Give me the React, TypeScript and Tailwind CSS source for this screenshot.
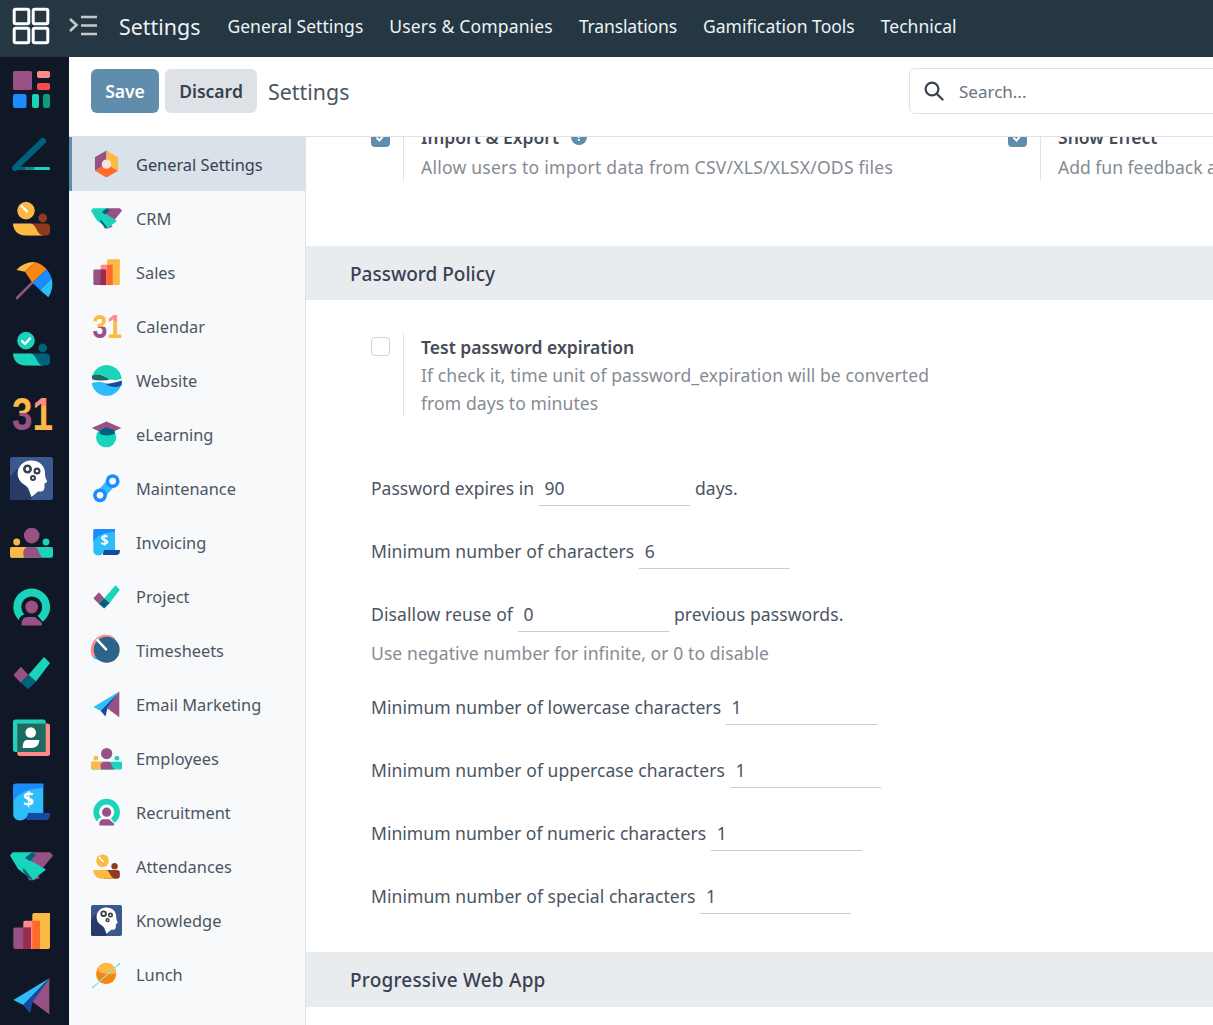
import type { ReactNode } from 'react';

const Box = ({ size, children }: { size: number; children: ReactNode }) => (
  <svg width={size} height={size} viewBox="0 0 43 43" className="shrink-0 block overflow-visible">
    {children}
  </svg>
);

const Dashboards = () => (
  <>
    <rect x="3" y="3" width="19" height="19" rx="1.5" fill="#985184" />
    <rect x="27" y="3" width="13" height="7" rx="2" fill="#ff8a8a" />
    <rect x="27" y="15" width="13" height="7" rx="2" fill="#fc4a4f" />
    <rect x="3" y="26" width="13.5" height="14" rx="2" fill="#1a8cff" />
    <rect x="22" y="26" width="7" height="14" rx="2" fill="#1ad3bb" />
    <rect x="33" y="26" width="7" height="14" rx="2" fill="#0a9d7e" />
  </>
);

const Pen = () => (
  <>
    <path d="M33 8 L5 35" stroke="#00627a" strokeWidth="6" strokeLinecap="round" fill="none" />
    <rect x="3" y="34" width="12" height="3" fill="#00627a" />
    <rect x="15" y="34" width="9" height="3" fill="#0f8a7e" />
    <rect x="24" y="34" width="16" height="3" rx="1" fill="#1ad3bb" />
  </>
);

const PersonBar = ({ a, b, hand }: { a: string; b: string; hand: ReactNode }) => (
  <>
    <circle cx="16" cy="13.6" r="8.8" fill={a} />
    <circle cx="32.7" cy="21" r="4.4" fill={b} />
    <path d="M18 26.5 H36 a4 4 0 0 1 4 4 v4 a4 4 0 0 1 -4 4 H18 Z" fill={b} />
    <path d="M3 26.5 H20 C27 26.5 26 38.5 34 38.5 H15 C8 38.5 3 33 3 26.5 Z" fill={a} />
    {hand}
  </>
);

const Attendance = () => (
  <PersonBar
    a="#fcb944"
    b="#8f3a1e"
    hand={<path d="M11.5 9 L17 14.5" stroke="#fff" strokeWidth="2.2" strokeLinecap="round" />}
  />
);

const CheckPerson = () => (
  <PersonBar
    a="#1ad3bb"
    b="#00627a"
    hand={<path d="M12 14 L15 17 L20 11.5" stroke="#fff" strokeWidth="2.4" fill="none" strokeLinecap="round" strokeLinejoin="round" />}
  />
);

const Umbrella = () => (
  <>
    <path d="M7 36 L22.3 20.7" stroke="#985184" strokeWidth="2.6" strokeLinecap="round" />
    <path d="M6.5 8 A24 24 0 0 1 25 0 L15 9.7 Z" fill="#fcb944" />
    <path d="M15 9.7 L25 0 A24 24 0 0 1 36.7 7.3 L22.3 20.7 Z" fill="#f78613" />
    <path d="M22.3 20.7 L36.7 7.3 A24 24 0 0 1 41.7 16.3 L30 28 Z" fill="#1a8cff" />
    <path d="M30 28 L41.7 16.3 A24 24 0 0 1 38.3 35.3 Z" fill="#2ebcfa" />
  </>
);

const Calendar = () => (
  <>
    <defs>
      <linearGradient id="cal3" gradientUnits="userSpaceOnUse" x1="0" y1="5" x2="0" y2="38">
        <stop offset="0.5" stopColor="#fcb944" />
        <stop offset="0.5" stopColor="#985184" />
      </linearGradient>
      <linearGradient id="cal1" gradientUnits="userSpaceOnUse" x1="0" y1="5" x2="0" y2="38">
        <stop offset="0.28" stopColor="#ff8a8a" />
        <stop offset="0.28" stopColor="#fcb944" />
      </linearGradient>
    </defs>
    <g transform="translate(2 0) scale(0.8 1)">
      <text y="38" fontSize="46" fontWeight="700" fontFamily="'Liberation Sans', sans-serif">
        <tspan fill="url(#cal3)">3</tspan>
        <tspan fill="url(#cal1)">1</tspan>
      </text>
    </g>
  </>
);

const Knowledge = () => (
  <>
    <rect width="43" height="43" rx="2.5" fill="#3a5a8f" />
    <path d="M0 20 L7 12 L22 41 L20 43 H2.5 A2.5 2.5 0 0 1 0 40.5 Z" fill="#283a66" />
    <path
      d="M21 3.5 C30 3.5 35.5 9.5 35 17 C34.8 20 36.5 23 37 24 C37.5 25.5 35 26 34.5 26.5 C34.5 30 35 34 31 34.5 L28 34.5 L21.5 40 L19 33 C18 28 11 28 8.5 21 C5.5 12 12 3.5 21 3.5 Z"
      fill="#fff"
    />
    <circle cx="17.5" cy="12" r="3.2" fill="none" stroke="#3b3f4a" strokeWidth="2.6" />
    <circle cx="27" cy="14" r="2.4" fill="none" stroke="#3b3f4a" strokeWidth="2.2" />
    <circle cx="23" cy="21" r="2" fill="none" stroke="#3b3f4a" strokeWidth="2" />
  </>
);

const Employees = () => (
  <>
    <circle cx="21.7" cy="14.6" r="7.8" fill="#985184" />
    <circle cx="6.7" cy="21" r="3.4" fill="#fcb944" />
    <circle cx="36" cy="21" r="3.4" fill="#1ad3bb" />
    <path d="M2 26 H41 A2 2 0 0 1 43 28 V34.7 A2 2 0 0 1 41 36.7 H2 A2 2 0 0 1 0 34.7 V28 A2 2 0 0 1 2 26 Z" fill="#1ad3bb" />
    <path d="M2 26 H16 V36.7 H2 A2 2 0 0 1 0 34.7 V28 A2 2 0 0 1 2 26 Z" fill="#fcb944" />
    <path d="M14 36.7 C13 33 12 26 19 26 H24 C30 26 27 33 33 36.7 Z" fill="#985184" />
  </>
);

const Recruitment = ({ hole = '#101828' }: { hole?: string }) => (
  <>
    <circle cx="21.7" cy="21" r="18.4" fill="#1ad3bb" />
    <circle cx="21.7" cy="21" r="10.5" fill={hole} />
    <path d="M26 28 L36 39.4 H9 V34 C9 30 14 28 18 28 Z" fill={hole} />
    <circle cx="21.7" cy="21" r="6.4" fill="#985184" />
    <path d="M11.7 39.4 C11 33.5 14 31 18 31 H25 L32 37 V39.4 Z" fill="#985184" />
  </>
);

const Project = () => (
  <>
    <path d="M3.3 24 L11 15.7 L18.3 24 L10.7 31.7 Z" fill="#985184" />
    <path d="M18.3 24 L34 6 L40 12 L26 30.5 Z" fill="#1ad3bb" />
    <path d="M10.7 31.7 L18.3 24 L26 30.5 L18.3 38.3 Z" fill="#00627a" />
  </>
);

const EmployeeCard = () => (
  <>
    <rect x="3" y="3.5" width="32.7" height="32.5" rx="2.5" fill="#1ad3bb" />
    <rect x="7.3" y="7.5" width="32.7" height="32.5" rx="2.5" fill="#ff8a8a" />
    <rect x="7.3" y="7.5" width="28.4" height="28.5" fill="#1c6b61" />
    <circle cx="20.7" cy="16.5" r="5.3" fill="#fff" />
    <path d="M17 24 H29.3 C29.3 29 26 32 21 32 H12.7 C12.7 27 14 24 17 24 Z" fill="#fff" />
  </>
);

const Invoicing = () => (
  <>
    <path d="M16.7 32 H40 V34 C40 37 38 39 35 39 H16.7 Z" fill="#164a9e" />
    <path d="M5.5 2.7 H33.3 V32 H18 C18 36 15 39.4 10 39.4 C6 39.4 3.3 37 3.3 33 V5 A2.2 2.2 0 0 1 5.5 2.7 Z" fill="#2ebcfa" />
    <path d="M5.5 2.7 H33.3 V7 C22 7 10 10 3.3 20 V5 A2.2 2.2 0 0 1 5.5 2.7 Z" fill="#1a8cff" />
    <text x="18.5" y="25" fontSize="19" fontWeight="700" textAnchor="middle" fill="#fff" fontFamily="'Noto Sans', sans-serif">
      $
    </text>
  </>
);

const Crm = () => (
  <>
    <path d="M14 24 L19 20 L30 33 L23 35.3 H19 Z" fill="#985184" />
    <path d="M20 7.3 H40 L43 10.6 L31.7 24.6 L18 13 Z" fill="#985184" />
    <path d="M2.7 7.3 H23 L18 14 L36 24.6 L23 35.3 L8 24 L0 10.6 Z" fill="#1ad3bb" />
    <path d="M15 13 L22 7.3 L26 10 L20 16 Z" fill="#00627a" />
    <path d="M13.5 23 L20 31 L23 35.3 L18.5 33 L13 26 Z" fill="#00627a" />
  </>
);

const Sales = () => (
  <>
    <path d="M24 3.1 H40 V37 A2 2 0 0 1 38 39 H22.3 V5 A2 2 0 0 1 24 3.1 Z" fill="#fcb944" />
    <path d="M15.5 10.8 H30 V39 H13.3 V13 A2 2 0 0 1 15.5 10.8 Z" fill="#ff8a8a" />
    <rect x="22.3" y="10.8" width="7.7" height="28.2" fill="#ff6a2b" />
    <path d="M5.5 17.5 H21 V39 H5 A2 2 0 0 1 3.3 37 V19.5 A2 2 0 0 1 5.5 17.5 Z" fill="#985184" />
    <rect x="13.3" y="17.5" width="7.7" height="21.5" fill="#9a2b4b" />
  </>
);

const Email = () => (
  <>
    <path d="M22.3 26.7 L39.3 3.3 V39.3 Z" fill="#985184" />
    <path d="M3.3 25 L39.3 3.3 L13.3 30 Z" fill="#2ebcfa" />
    <path d="M13.3 30 L20 38.3 L22.8 26.5 L39.3 3.3 Z" fill="#164a9e" />
  </>
);

const GeneralSettings = () => (
  <>
    <path d="M21.5 21 L5.5 30 V11.5 L21.5 2 Z" fill="#985184" />
    <path d="M21.5 2 L37.5 11.5 V30 L21.5 21 Z" fill="#fcb944" />
    <path d="M5.5 30 L21.5 21 L37.5 30 L21.5 39.5 Z" fill="#ff6a2b" />
    <circle cx="21.5" cy="21" r="6.5" fill="#f3e4dc" />
  </>
);

const Website = () => (
  <>
    <path d="M1.5 15 A21 21 0 0 1 42 16 L42.5 19 C35 21 31 21 26 20 C18 14 8 11 1.5 15 Z" fill="#1ad3bb" />
    <path d="M1.5 15 C8 11 18 14 26 20.5 C18 22 8 22 2 20 C1 18 1 16.5 1.5 15 Z" fill="#1c6b61" />
    <path d="M1 25 C9 23 15 23 22 26 C30 30 36 28 42.5 25 A21 21 0 0 1 1 25 Z" fill="#2ebcfa" />
    <path d="M20 26 C28 26 35 24 42.5 21.5 C43 24 43 26 42 28.5 C35 32 27 31 20 26 Z" fill="#164a9e" />
  </>
);

const ELearning = () => (
  <>
    <circle cx="21" cy="25.3" r="14" fill="#1ad3bb" />
    <path d="M21.5 3.5 L42 12.4 L33 16.5 H10 L1 12.4 Z" fill="#985184" />
    <path d="M12 16 L21.5 11.3 L33 16 V20 C27 23.8 17 23.8 12 20 Z" fill="#00627a" />
  </>
);

const Maintenance = () => (
  <>
    <path d="M12.5 31 L30 11.3" stroke="#2ebcfa" strokeWidth="13" />
    <circle cx="12.5" cy="31" r="9.6" fill="#1a8cff" />
    <circle cx="30" cy="11.3" r="9.6" fill="#1a8cff" />
    <circle cx="12.5" cy="31" r="4.6" fill="#f8f9fa" />
    <circle cx="30" cy="11.3" r="4.6" fill="#f8f9fa" />
  </>
);

const Timesheets = () => (
  <>
    <path d="M3 32 A21 21 0 0 1 32 3 Z" fill="#ff8a8a" />
    <path d="M32 3 A21 21 0 0 1 3 32 Z" fill="#2ebcfa" />
    <circle cx="21.8" cy="20.5" r="18" fill="#2b6488" />
    <path d="M9 7 L21 20" stroke="#fff" strokeWidth="3.4" strokeLinecap="round" />
  </>
);

const Lunch = () => (
  <>
    <circle cx="21" cy="21" r="14" fill="#f78613" />
    <path d="M8 14 A14 14 0 0 1 35 20 C25 21 13 22 8 14 Z" fill="#fcb944" />
    <path d="M2 40 L40 6" stroke="#1ad3bb" strokeWidth="1.4" />
    <path d="M4 38 L37 9" stroke="#fff" strokeWidth="0.9" />
  </>
);

const railIcons = [
  Dashboards,
  Pen,
  Attendance,
  Umbrella,
  CheckPerson,
  Calendar,
  Knowledge,
  Employees,
  Recruitment,
  Project,
  EmployeeCard,
  Invoicing,
  Crm,
  Sales,
  Email,
];

const menuItems = [
  { label: 'General Settings', Icon: GeneralSettings },
  { label: 'CRM', Icon: Crm },
  { label: 'Sales', Icon: Sales },
  { label: 'Calendar', Icon: Calendar },
  { label: 'Website', Icon: Website },
  { label: 'eLearning', Icon: ELearning },
  { label: 'Maintenance', Icon: Maintenance },
  { label: 'Invoicing', Icon: Invoicing },
  { label: 'Project', Icon: Project },
  { label: 'Timesheets', Icon: Timesheets },
  { label: 'Email Marketing', Icon: Email },
  { label: 'Employees', Icon: Employees },
  { label: 'Recruitment', Icon: () => <Recruitment hole="#f8f9fa" /> },
  { label: 'Attendances', Icon: Attendance },
  { label: 'Knowledge', Icon: Knowledge },
  { label: 'Lunch', Icon: Lunch },
];

const TopBar = () => (
  <header className="flex items-center h-[57px] shrink-0 bg-[#243742] text-[#eef2f5]">
    <svg width="69" height="57" viewBox="0 0 69 57" className="shrink-0" fill="none" stroke="#fff" strokeWidth="3">
      <rect x="14.2" y="9.2" width="14.6" height="14.6" rx="1.5" />
      <rect x="33.2" y="9.2" width="14.6" height="14.6" rx="1.5" />
      <rect x="14.2" y="28.2" width="14.6" height="14.6" rx="1.5" />
      <rect x="33.2" y="28.2" width="14.6" height="14.6" rx="1.5" />
    </svg>
    <svg width="29" height="21" viewBox="0 0 29 21" className="shrink-0 -mt-[6px]" fill="none" stroke="#c4c8cb" strokeWidth="2.6">
      <path d="M1 4 L7.5 10 L1 16" />
      <path d="M12 2 H28 M12 10.5 H28 M12 19 H28" />
    </svg>
    <span className="ml-[21px] mr-[27px] pb-[3px] text-[21.4px]">Settings</span>
    <nav className="flex gap-[26px] pb-[4px] text-[17.55px]">
      <span>General Settings</span>
      <span className="tracking-[0.15px]">Users &amp; Companies</span>
      <span className="-tracking-[0.15px]">Translations</span>
      <span>Gamification Tools</span>
      <span>Technical</span>
    </nav>
  </header>
);

const ControlPanel = () => (
  <div className="flex items-start h-[80px] shrink-0 pl-[22px] pt-[11px] bg-white border-b border-[#dee2e6]">
    <div className="flex items-center h-[46px]">
      <button className="w-[68px] h-[44px] shrink-0 rounded-[6px] bg-[#5f8dab] text-white text-[17.55px] font-semibold">Save</button>
      <button className="w-[92px] h-[44px] shrink-0 ml-[6px] rounded-[6px] bg-[#dee2e6] text-[#374151] text-[17.55px] font-semibold">
        Discard
      </button>
      <span className="w-[81px] shrink-0 ml-[11px] pt-[2px] text-[21.4px] text-[#4b5563]">Settings</span>
      <div className="flex items-center ml-[560px] w-[500px] h-[46px] shrink-0 pl-[14px] border border-[#dee2e6] rounded-[6px]">
        <svg width="20" height="20" viewBox="0 0 20 20" fill="none" stroke="#374151" strokeWidth="2.2">
          <circle cx="8" cy="8" r="6.4" />
          <path d="M12.6 12.6 L18.5 18.5" strokeLinecap="round" />
        </svg>
        <span className="ml-[15px] pt-[1px] text-[17px] text-[#6b7280]">Search...</span>
      </div>
    </div>
  </div>
);

const Checkbox = ({ checked }: { checked?: boolean }) =>
  checked ? (
    <div className="flex items-center justify-center w-[19px] h-[19px] -mt-[1px] rounded-[4px] bg-[#5f8dab]">
      <svg width="13" height="13" viewBox="0 0 13 13" fill="none" stroke="#fff" strokeWidth="2">
        <path d="M2.5 6.5 L5.5 9.5 L10.5 3.5" />
      </svg>
    </div>
  ) : (
    <div className="w-[19px] h-[19px] rounded-[4px] border border-[#ced4da] bg-white" />
  );

const Setting = ({
  title,
  help,
  checked,
  width,
  children,
}: {
  title: string;
  help?: boolean;
  checked?: boolean;
  width: string;
  children: ReactNode;
}) => (
  <div className={`flex shrink-0 ${width}`}>
    <div className="w-[32px] pt-[4px] shrink-0">
      <Checkbox checked={checked} />
    </div>
    <div className="pl-[17px] border-l border-[#dee2e6] leading-[28px]">
      <div className={`flex items-center gap-[12px] font-semibold text-[#454b55] ${checked ? '-mt-[2px] mb-[2px]' : ''}`}>
        {title}
        {help && (
          <span className="flex items-center justify-center w-[16px] h-[16px] rounded-full bg-[#5f8dab] text-white text-[12px] font-bold">
            ?
          </span>
        )}
      </div>
      <div className="text-[#858b93]">{children}</div>
    </div>
  </div>
);

const SectionBar = ({ title, className }: { title: string; className: string }) => (
  <div className={`flex items-center pl-[44px] pt-[2px] bg-[#e9ecef] text-[19px] font-medium text-[#374151] ${className}`}>{title}</div>
);

const NumberRow = ({
  label,
  value,
  suffix,
  tracking = 'tracking-[0.05px]',
}: {
  label: string;
  value: string;
  suffix?: string;
  tracking?: string;
}) => (
  <div className={`flex items-center h-[37px] pt-[1px] text-[#4b5563] ${tracking}`}>
    <span>{label}</span>
    <div className="flex items-center w-[151px] h-[36px] ml-[5px] pl-[5.5px] pt-[1px] border-b border-[#ccc]">{value}</div>
    {suffix && <span className="ml-[5px]">{suffix}</span>}
  </div>
);

const Sidebar = () => (
  <aside className="flex flex-col w-[237px] shrink-0 bg-[#f8f9fa] border-r border-[#dee2e6]">
    {menuItems.map(({ label, Icon }, i) => (
      <div
        key={label}
        className={`flex items-center h-[54px] shrink-0 gap-[14px] text-[16.35px] text-[#4b5563] border-l-[3px] pl-[19px] ${
          i === 0 ? 'bg-[#d8e2e8] border-[#5f8dab] text-[#374151]' : 'border-transparent'
        }`}
      >
        <Box size={31}>
          <Icon />
        </Box>
        <span className="pt-[2px]">{label}</span>
      </div>
    ))}
  </aside>
);

const Content = () => (
  <main className="flex-1 min-w-0 overflow-hidden bg-white">
    <div className="-mt-[12px] w-[1100px]">
      <div className="flex pl-[65px] pb-[65px]">
        <Setting title="Import & Export" help checked width="w-[637px]">
          <span className="tracking-[0.24px]">Allow users to import data from CSV/XLS/XLSX/ODS files</span>
        </Setting>
        <Setting title="Show Effect" checked width="w-[400px]">
          <span className="whitespace-nowrap">Add fun feedback and motivate your employees</span>
        </Setting>
      </div>
      <SectionBar title="Password Policy" className="h-[54px]" />
      <div className="pt-[33px] pb-[38px] pl-[65px]">
        <Setting title="Test password expiration" width="w-[575px]">
          <span className="tracking-[0.08px]">If check it, time unit of password_expiration will be converted from days to minutes</span>
        </Setting>
        <div className="mt-[52px] flex flex-col gap-[26px]">
          <NumberRow label="Password expires in" value="90" suffix="days." tracking="tracking-normal" />
          <NumberRow label="Minimum number of characters" value="6" />
          <div>
            <NumberRow label="Disallow reuse of" value="0" suffix="previous passwords." tracking="tracking-[0.1px]" />
            <div className="mt-[7px] -mb-[5px] leading-[28px] text-[#858b93] tracking-[0.08px]">
              Use negative number for infinite, or 0 to disable
            </div>
          </div>
          <NumberRow label="Minimum number of lowercase characters" value="1" />
          <NumberRow label="Minimum number of uppercase characters" value="1" />
          <NumberRow label="Minimum number of numeric characters" value="1" tracking="tracking-[0.02px]" />
          <NumberRow label="Minimum number of special characters" value="1" />
        </div>
      </div>
      <SectionBar title="Progressive Web App" className="h-[55px] tracking-[0.2px]" />
    </div>
  </main>
);

export default function App() {
  return (
    <div className="flex flex-col w-full h-screen overflow-hidden bg-white text-[17.55px] font-['Noto_Sans',sans-serif]">
      <TopBar />
      <div className="flex flex-1 min-h-0">
        <div className="flex flex-col w-[69px] shrink-0 pl-[10px] overflow-hidden bg-[#101828]">
          {railIcons.map((Icon, i) => (
            <div key={i} className="flex items-center h-[64.8px] shrink-0">
              <Box size={43}>
                <Icon />
              </Box>
            </div>
          ))}
        </div>
        <div className="flex flex-col flex-1 min-w-0">
          <ControlPanel />
          <div className="flex flex-1 min-h-0">
            <Sidebar />
            <Content />
          </div>
        </div>
      </div>
    </div>
  );
}
